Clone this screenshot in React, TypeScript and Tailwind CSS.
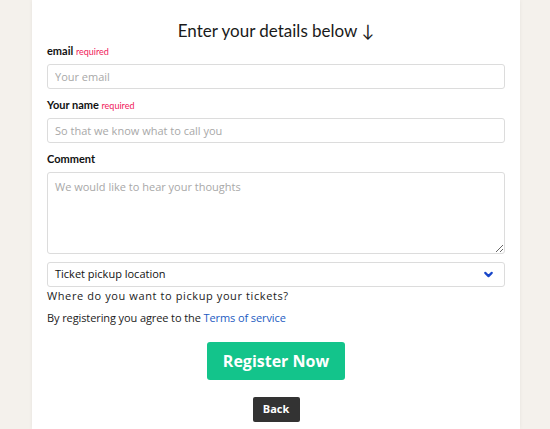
import { ChevronDown } from "lucide-react"

const fields = [
  { label: "email", required: true, placeholder: "Your email" },
  { label: "Your name", required: true, placeholder: "So that we know what to call you" },
]

export default function App() {
  return (
    <div className="min-h-[429px] w-[550px] bg-[#f4f1ec] font-['Lato',sans-serif]">
      <div className="mx-[32px] flex min-h-[429px] w-[488px] flex-col bg-white px-[15px] pt-[21px] shadow-[0_0_4px_rgba(0,0,0,0.06)]">
        <h2 className="h-[20px] text-center text-[17px] leading-[20px] text-[#1a1a1a]">Enter your details below ↓</h2>

        {fields.map((f, i) => (
          <div key={f.label} className={i === 0 ? "mt-[3px]" : "mt-[9px]"}>
            <div className="h-[14px] text-[11px] leading-[14px] font-bold text-[#111]">
              {f.label}{" "}
              <span className="text-[9px] font-normal text-[#f0185a]">required</span>
            </div>
            <input
              readOnly
              placeholder={f.placeholder}
              className="mt-[6px] h-[25px] w-full rounded-[3px] border border-[#dcdcdc] px-[7px] font-['Open_Sans',sans-serif] text-[11px] placeholder:text-[#a8a8a8] outline-none"
            />
          </div>
        ))}

        <div className="mt-[9px] h-[14px] text-[11px] leading-[14px] font-bold text-[#111]">Comment</div>
        <textarea
          readOnly
          placeholder="We would like to hear your thoughts"
          className="mt-[6px] h-[82px] w-full rounded-[3px] border border-[#dcdcdc] px-[7px] py-[6px] font-['Open_Sans',sans-serif] text-[11px] placeholder:text-[#a8a8a8] outline-none"
        />

        <div className="mt-[8px] flex h-[25px] items-center justify-between rounded-[3px] border border-[#dcdcdc] pl-[7px] pr-[9px] font-['Open_Sans',sans-serif] text-[11px] text-[#111]">
          <span>Ticket pickup location</span>
          <ChevronDown className="h-[13px] w-[13px] text-[#1846c9]" strokeWidth={4} />
        </div>
        <p className="mt-[2px] h-[14px] font-['Open_Sans',sans-serif] text-[11px] leading-[14px] tracking-[0.6px] text-[#222]">Where do you want to pickup your tickets?</p>
        <p className="mt-[8px] h-[14px] font-['Open_Sans',sans-serif] text-[11px] leading-[14px] tracking-[-0.1px] text-[#222]">
          By registering you agree to the <span className="text-[#1c5bc2]">Terms of service</span>
        </p>

        <button className="mx-auto mt-[17px] h-[38px] w-[138px] rounded-[3px] bg-[#13c48b] font-['Open_Sans',sans-serif] text-[16px] font-bold text-white">
          Register Now
        </button>
        <button className="mx-auto mt-[17px] h-[25px] w-[47px] rounded-[2px] bg-[#333] font-['Open_Sans',sans-serif] text-[11px] font-bold text-white">
          Back
        </button>
      </div>
    </div>
  )
}
